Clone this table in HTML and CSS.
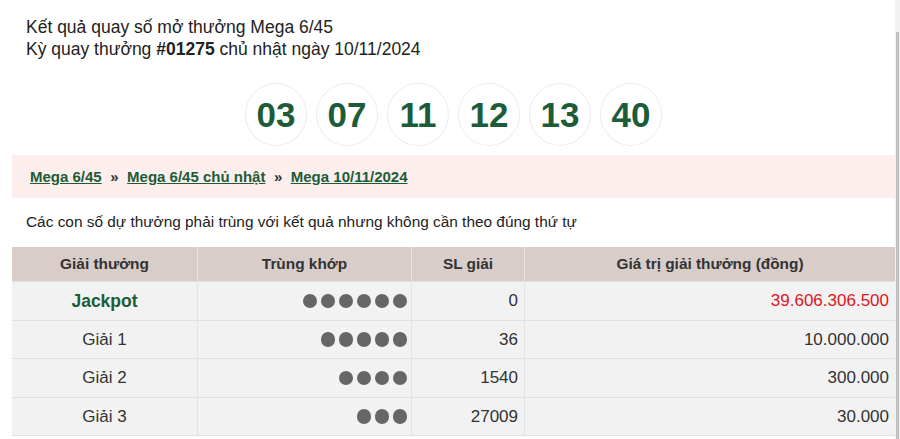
FILE: index.html
```html
<!DOCTYPE html>
<html lang="vi">
<head>
<meta charset="utf-8">
<title>Mega 6/45</title>
<link rel="stylesheet" href="styles.css">
</head>
<body>
<div class="page">
  <div class="title">
    <div>Kết quả quay số mở thưởng Mega 6/45</div>
    <div>Kỳ quay thưởng <b>#01275</b> chủ nhật ngày 10/11/2024</div>
  </div>
  <div class="balls">
    <span class="ball">03</span>
    <span class="ball">07</span>
    <span class="ball">11</span>
    <span class="ball">12</span>
    <span class="ball">13</span>
    <span class="ball">40</span>
  </div>
  <div class="crumbs">
    <a href="#">Mega 6/45</a><span class="sep">»</span><a href="#">Mega 6/45 chủ nhật</a><span class="sep">»</span><a href="#">Mega 10/11/2024</a>
  </div>
  <p class="note">Các con số dự thưởng phải trùng với kết quả nhưng không cần theo đúng thứ tự</p>
  <table class="prizes">
    <thead>
      <tr><th class="c1">Giải thưởng</th><th class="c2">Trùng khớp</th><th class="c3">SL giải</th><th>Giá trị giải thưởng (đồng)</th></tr>
    </thead>
    <tbody>
      <tr><td class="name jackpot">Jackpot</td><td class="dots"><i></i><i></i><i></i><i></i><i></i><i></i></td><td class="num">0</td><td class="num red">39.606.306.500</td></tr>
      <tr><td class="name">Giải 1</td><td class="dots"><i></i><i></i><i></i><i></i><i></i></td><td class="num">36</td><td class="num">10.000.000</td></tr>
      <tr><td class="name">Giải 2</td><td class="dots"><i></i><i></i><i></i><i></i></td><td class="num">1540</td><td class="num">300.000</td></tr>
      <tr><td class="name">Giải 3</td><td class="dots"><i></i><i></i><i></i></td><td class="num">27009</td><td class="num">30.000</td></tr>
    </tbody>
  </table>
</div>
<div class="scrollbar"><div class="thumb"></div></div>
</body>
</html>
```
FILE: styles.css
```css
html, body {
  margin: 0;
  padding: 0;
  background: #fff;
}
body {
  font-family: "Liberation Sans", Arial, sans-serif;
  color: #222;
  overflow: hidden;
}
.page {
  margin: 0 5px 0 12px;
}
.title {
  padding: 16px 14px 0;
  font-size: 17.5px;
  line-height: 22px;
  color: #222;
}
.balls {
  display: flex;
  justify-content: center;
  gap: 9px;
  margin-top: 23px;
}
.ball {
  width: 60px;
  height: 60px;
  border: 1px solid #ececec;
  border-radius: 50%;
  display: flex;
  align-items: center;
  justify-content: center;
  font-weight: bold;
  font-size: 35px;
  line-height: 1;
  padding-bottom: 1px;
  box-sizing: content-box;
  color: #1d5c38;
}
.crumbs {
  margin-top: 9px;
  background: #fbeeed;
  height: 43px;
  line-height: 43px;
  padding: 0 18px;
  font-size: 15px;
  font-weight: bold;
}
.crumbs a {
  color: #1d5c38;
  text-decoration: underline;
}
.crumbs .sep {
  color: #333;
  margin: 0 8.5px;
}
.note {
  margin: 14px 14px 15px;
  font-size: 15.4px;
  line-height: 20px;
  color: #222;
}
.prizes {
  width: 100%;
  border-collapse: collapse;
  font-size: 17px;
  color: #333;
}
.prizes th {
  background: #d8cdc9;
  font-size: 15.4px;
  font-weight: bold;
  line-height: 20px;
  padding: 7px 6px 7px;
  text-align: center;
  color: #333;
  border-left: 1px solid #ebe3e1;
}
.prizes th:first-child { border-left: none; }
.prizes th.c1 { width: 173px; }
.prizes th.c2 { width: 201px; }
.prizes th.c3 { width: 100px; }
.prizes td {
  background: #f2f2f2;
  line-height: 20px;
  padding: 9px 6px 8.5px;
  border-top: 1px solid #e2e2e2;
  border-left: 1px solid #e2e2e2;
}
.prizes td:first-child { border-left: none; }
.prizes tbody tr:last-child td { border-bottom: 1px solid #e2e2e2; }
.name { text-align: center; }
.jackpot { color: #1d5c38; font-weight: bold; font-size: 17.5px; }
.num { text-align: right; }
.red { color: #e0141e; }
.dots {
  text-align: right;
  font-size: 0;
  padding-right: 4px !important;
}
.dots i {
  display: inline-block;
  width: 14.5px;
  height: 14.5px;
  border-radius: 50%;
  background: #666;
  margin-left: 3.5px;
  vertical-align: middle;
}
.scrollbar {
  position: fixed;
  top: 0;
  right: 0;
  width: 5px;
  height: 100%;
  background: #f1f1f1;
}
.scrollbar .thumb {
  position: absolute;
  top: 32px;
  bottom: 0;
  left: 1px;
  width: 3px;
  background: #c1c1c1;
}
```
